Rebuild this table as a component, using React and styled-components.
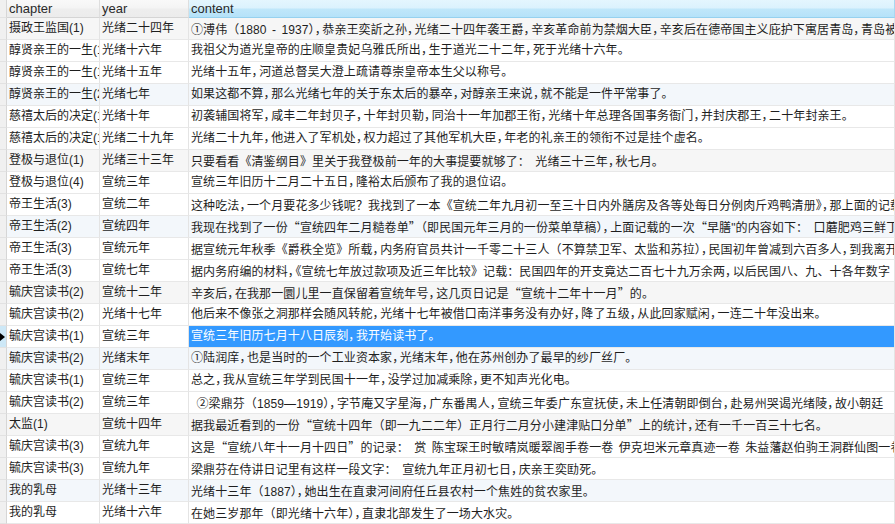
import React from 'react';
import styled, { createGlobalStyle } from 'styled-components';

const rows = [
  ['摄政王监国(1)', '光绪二十四年', '①溥伟（1880 - 1937），恭亲王奕訢之孙，光绪二十四年袭王爵，辛亥革命前为禁烟大臣，辛亥后在德帝国主义庇护下寓居青岛，青岛被日本占领后移居大连。'],
  ['醇贤亲王的一生(1)', '光绪十六年', '我祖父为道光皇帝的庄顺皇贵妃乌雅氏所出，生于道光二十二年，死于光绪十六年。'],
  ['醇贤亲王的一生(1)', '光绪十五年', '光绪十五年，河道总督吴大澄上疏请尊崇皇帝本生父以称号。'],
  ['醇贤亲王的一生(2)', '光绪七年', '如果这都不算，那么光绪七年的关于东太后的暴卒，对醇亲王来说，就不能是一件平常事了。'],
  ['慈禧太后的决定(1)', '光绪十年', '初袭辅国将军，咸丰二年封贝子，十年封贝勒，同治十一年加郡王衔，光绪十年总理各国事务衙门，并封庆郡王，二十年封亲王。'],
  ['慈禧太后的决定(1)', '光绪二十九年', '光绪二十九年，他进入了军机处，权力超过了其他军机大臣，年老的礼亲王的领衔不过是挂个虚名。'],
  ['登极与退位(1)', '光绪三十三年', '只要看看《清鉴纲目》里关于我登极前一年的大事提要就够了： 光绪三十三年，秋七月。'],
  ['登极与退位(4)', '宣统三年', '宣统三年旧历十二月二十五日，隆裕太后颁布了我的退位诏。'],
  ['帝王生活(3)', '宣统二年', '这种吃法，一个月要花多少钱呢？我找到了一本《宣统二年九月初一至三十日内外膳房及各等处每日分例肉斤鸡鸭清册》，那上面的记载如下：'],
  ['帝王生活(2)', '宣统四年', '我现在找到了一份“宣统四年二月糙卷单”（即民国元年三月的一份菜单草稿），上面记载的一次“早膳"的内容如下： 口蘑肥鸡三鲜丁'],
  ['帝王生活(3)', '宣统元年', '据宣统元年秋季《爵秩全览》所载，内务府官员共计一千零二十三人（不算禁卫军、太监和苏拉），民国初年曾减到六百多人，到我离开'],
  ['帝王生活(3)', '宣统七年', '据内务府编的材料，《宣统七年放过款项及近三年比较》记载：民国四年的开支竟达二百七十九万余两，以后民国八、九、十各年数字'],
  ['毓庆宫读书(2)', '宣统十二年', '辛亥后，在我那一圜儿里一直保留着宣统年号，这几页日记是“宣统十二年十一月”的。'],
  ['毓庆宫读书(2)', '光绪十七年', '他后来不像张之洞那样会随风转舵，光绪十七年被借口南洋事务没有办好，降了五级，从此回家赋闲，一连二十年没出来。'],
  ['毓庆宫读书(1)', '宣统三年', '宣统三年旧历七月十八日辰刻，我开始读书了。'],
  ['毓庆宫读书(2)', '光绪末年', '①陆润庠，也是当时的一个工业资本家，光绪末年，他在苏州创办了最早的纱厂丝厂。'],
  ['毓庆宫读书(1)', '宣统三年', '总之，我从宣统三年学到民国十一年，没学过加减乘除，更不知声光化电。'],
  ['毓庆宫读书(2)', '宣统三年', '\u00a0②梁鼎芬（1859—1919），字节庵又字星海，广东番禺人，宣统三年委广东宣抚使，未上任清朝即倒台，赴易州哭谒光绪陵，故小朝廷'],
  ['太监(1)', '宣统十四年', '据我最近看到的一份“宣统十四年（即一九二二年）正月行二月分小建津贴口分单”上的统计，还有一千一百三十七名。'],
  ['毓庆宫读书(3)', '宣统九年', '这是“宣统八年十一月十四日”的记录： 赏 陈宝琛王时敏晴岚暖翠阁手卷一卷 伊克坦米元章真迹一卷 朱益藩赵伯驹王洞群仙图一卷'],
  ['毓庆宫读书(3)', '宣统九年', '梁鼎芬在侍讲日记里有这样一段文字： 宣统九年正月初七日，庆亲王奕劻死。'],
  ['我的乳母', '光绪十三年', '光绪十三年（1887），她出生在直隶河间府任丘县农村一个焦姓的贫农家里。'],
  ['我的乳母', '光绪十六年', '在她三岁那年（即光绪十六年），直隶北部发生了一场大水灾。'],
];

const SELECTED = 14;

const GlobalStyle = createGlobalStyle`
  html, body {
    margin: 0;
    padding: 0;
    background: #ffffff;
    overflow: hidden;
  }
`;

const Grid = styled.div`
  width: 895px;
  height: 524px;
  overflow: hidden;
  font-family: "Liberation Sans", "Noto Sans CJK SC", sans-serif;
  font-feature-settings: "halt";
  font-size: 12px;
  color: #1e1e1e;
`;

const Row = styled.div`
  display: grid;
  grid-template-columns: 7px 93px 89px 1fr;
  height: ${(p) => (p.$header ? 18 : 22)}px;
  background: ${(p) => p.$tint || '#ffffff'};
`;

const Indicator = styled.div`
  display: flex;
  align-items: center;
  border-right: 1px solid #d6d6d6;
  border-bottom: 1px solid #e2e2e2;
  background: ${(p) => (p.$active ? '#cde8f7' : '#f0f0f0')};
`;

const Arrow = styled.span`
  width: 0;
  height: 0;
  border-top: 4px solid transparent;
  border-bottom: 4px solid transparent;
  border-left: 5px solid #000000;
`;

const HeadCell = styled.div`
  padding-left: 2px;
  line-height: 17px;
  font-size: 13px;
  color: #2a2a2a;
  border-right: 1px solid ${(p) => (p.$sorted ? '#a9d8f0' : '#dedede')};
  border-bottom: 1px solid ${(p) => (p.$sorted ? '#96d1ef' : '#d5d5d5')};
  background: ${(p) =>
    p.$sorted
      ? 'linear-gradient(#e4f6fe 0%, #dbf2fd 48%, #c0e7fa 52%, #b5e2f9 100%)'
      : 'linear-gradient(#f9f9f9 0%, #f4f4f4 48%, #eeeeee 52%, #ececec 100%)'};
`;

const Cell = styled.div`
  padding-left: 2px;
  line-height: 21px;
  white-space: nowrap;
  overflow: hidden;
  border-right: 1px solid #e4e4e4;
  border-bottom: 1px solid #e8e8e8;
  background: ${(p) => (p.$selected ? '#3399ff' : 'transparent')};
  color: ${(p) => (p.$selected ? '#ffffff' : 'inherit')};
`;

const ContentCell = styled(Cell)`
  word-spacing: 2px;
  letter-spacing: 0.1px;
`;

// brackets, quotes, colons and enumeration commas keep their full width
const Wide = styled.span`
  font-family: "Noto Sans CJK SC", sans-serif;
  font-feature-settings: normal;
`;

// commas and stops are narrow but not quite half
const Stop = styled.span`
  padding-right: 1.5px;
`;

const SPLIT = /([（）《》“”：？、，。])/;
const WIDE = /[（）《》“”：？、]/;

const Text = ({ children }) =>
  children.split(SPLIT).map((part, i) => {
    if (!part) return null;
    if (WIDE.test(part)) return <Wide key={i}>{part}</Wide>;
    if (SPLIT.test(part)) return <Stop key={i}>{part}</Stop>;
    return part;
  });

const tintFor = (i) => {
  if (i % 6 === 0) return '#f6f6f6';
  if (i % 6 === 3) return '#f3f7fb';
  return '#ffffff';
};

export default function App() {
  return (
    <>
      <GlobalStyle />
      <Grid>
        <Row $header>
          <Indicator />
          <HeadCell>chapter</HeadCell>
          <HeadCell>year</HeadCell>
          <HeadCell $sorted>content</HeadCell>
        </Row>
        {rows.map(([chapter, year, content], i) => (
          <Row key={i} $tint={i === SELECTED ? '#ffffff' : tintFor(i)}>
            <Indicator $active={i === SELECTED}>{i === SELECTED && <Arrow />}</Indicator>
            <Cell>{chapter}</Cell>
            <Cell>{year}</Cell>
            <ContentCell $selected={i === SELECTED}>
              <Text>{content}</Text>
            </ContentCell>
          </Row>
        ))}
      </Grid>
    </>
  );
}
